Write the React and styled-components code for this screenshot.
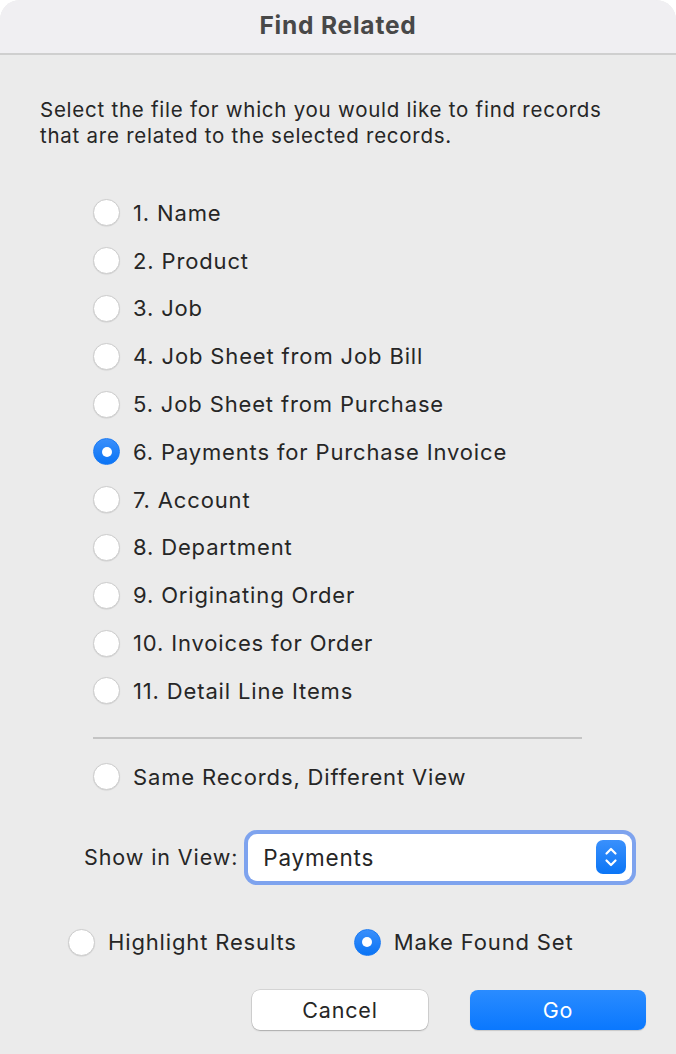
import React, { useState } from 'react';
import styled, { createGlobalStyle } from 'styled-components';

const GlobalStyle = createGlobalStyle`
  html, body {
    margin: 0;
    padding: 0;
    background: #ffffff;
  }
  * {
    box-sizing: border-box;
  }
`;

const Window = styled.div`
  width: 676px;
  height: 1054px;
  background-color: #ebebeb;
  border-radius: 20px 20px 0 0;
  overflow: hidden;
  font-family: Inter, "Liberation Sans", Arial, sans-serif;
  color: #262626;
  display: flex;
  flex-direction: column;
`;

const TitleBar = styled.div`
  height: 55px;
  flex-shrink: 0;
  background-color: #f0eff2;
  border-bottom: 2px solid #cfcfcf;
  display: flex;
  align-items: center;
  justify-content: center;
  padding-bottom: 3px;
`;

const Title = styled.h1`
  margin: 0;
  font-size: 24.5px;
  font-weight: 700;
  color: #484848;
  letter-spacing: 0.8px;
`;

const Body = styled.div`
  display: flex;
  flex-direction: column;
  padding: 42px 0 0 40px;
`;

const Intro = styled.p`
  margin: 0 0 40px;
  font-size: 20.5px;
  line-height: 26px;
  letter-spacing: 0.75px;
`;

const RadioList = styled.div`
  display: flex;
  flex-direction: column;
  padding-left: 53px;
`;

const RadioRow = styled.label`
  display: flex;
  align-items: center;
  gap: 13px;
  height: 47.8px;
  font-size: 22px;
  letter-spacing: 0.85px;
  cursor: default;
`;

const Circle = styled.span`
  width: 27px;
  height: 27px;
  flex-shrink: 0;
  border-radius: 50%;
  display: flex;
  align-items: center;
  justify-content: center;
  background: ${(p) => (p.$on ? 'linear-gradient(#3a8ffb, #0a74f5)' : '#ffffff')};
  border: 1px solid ${(p) => (p.$on ? '#1a7af3' : '#cdcdcd')};
  box-shadow: ${(p) => (p.$on ? 'none' : '0 0.5px 1px rgba(0, 0, 0, 0.12)')};

  &::after {
    content: '';
    display: ${(p) => (p.$on ? 'block' : 'none')};
    width: 10px;
    height: 10px;
    border-radius: 50%;
    background: #ffffff;
  }
`;

const Separator = styled.hr`
  width: 489px;
  margin: 22px 0 14px 53px;
  border: none;
  border-top: 2px solid #c4c4c4;
`;

const ViewRow = styled.div`
  display: flex;
  align-items: center;
  gap: 6px;
  margin: 29px 0 0 44px;
`;

const ViewLabel = styled.span`
  font-size: 21.5px;
  letter-spacing: 0.9px;
`;

const SelectRing = styled.div`
  width: 392px;
  height: 55px;
  padding: 4px;
  border-radius: 13px;
  background-color: #7ea3ee;
`;

const SelectBox = styled.div`
  height: 100%;
  border-radius: 9px;
  background: #ffffff;
  display: flex;
  align-items: center;
  justify-content: space-between;
  padding: 0 6px 0 15px;
  font-size: 22.5px;
  letter-spacing: 0.8px;
`;

const Stepper = styled.span`
  width: 30px;
  height: 34px;
  border-radius: 7px;
  background: linear-gradient(#3a90fc, #0a75f6);
  display: flex;
  align-items: center;
  justify-content: center;
`;

const OptionsRow = styled.div`
  display: flex;
  align-items: center;
  margin: 34px 0 0 28px;
  gap: 57px;
`;

const ButtonRow = styled.div`
  display: flex;
  gap: 42px;
  margin: 24px 0 0 212px;
`;

const Button = styled.button`
  width: 176px;
  height: 40px;
  border-radius: 8px;
  font-family: inherit;
  font-size: 21.5px;
  letter-spacing: 0.8px;
  color: ${(p) => (p.$primary ? '#ffffff' : '#262626')};
  background: ${(p) => (p.$primary ? 'linear-gradient(#2a8cff, #0a78fe)' : '#ffffff')};
  border: none;
  box-shadow: ${(p) =>
    p.$primary
      ? '0 1px 1px rgba(0, 0, 0, 0.15)'
      : '0 0 0 0.5px rgba(0, 0, 0, 0.18), 0 1px 1.5px rgba(0, 0, 0, 0.2)'};
  cursor: default;
`;

const Radio = ({ on, children, onPick }) => (
  <RadioRow onClick={onPick}>
    <Circle $on={on} />
    {children}
  </RadioRow>
);

const files = [
  '1. Name',
  '2. Product',
  '3. Job',
  '4. Job Sheet from Job Bill',
  '5. Job Sheet from Purchase',
  '6. Payments for Purchase Invoice',
  '7. Account',
  '8. Department',
  '9. Originating Order',
  '10. Invoices for Order',
  '11. Detail Line Items',
];

const App = () => {
  const [picked, setPicked] = useState(5);
  const [foundSet, setFoundSet] = useState(true);

  return (
    <>
      <GlobalStyle />
      <Window>
        <TitleBar>
          <Title>Find Related</Title>
        </TitleBar>
        <Body>
          <Intro>
            Select the file for which you would like to find records
            <br />
            that are related to the selected records.
          </Intro>
          <RadioList>
            {files.map((name, i) => (
              <Radio key={name} on={picked === i} onPick={() => setPicked(i)}>
                {name}
              </Radio>
            ))}
          </RadioList>
          <Separator />
          <RadioList>
            <Radio on={picked === -1} onPick={() => setPicked(-1)}>
              Same Records, Different View
            </Radio>
          </RadioList>
          <ViewRow>
            <ViewLabel>Show in View:</ViewLabel>
            <SelectRing>
              <SelectBox>
                Payments
                <Stepper>
                  <svg width="14" height="22" viewBox="0 0 14 22" fill="none">
                    <path d="M2.5 7.5 L7 3 L11.5 7.5" stroke="#fff" strokeWidth="2.2" strokeLinecap="round" strokeLinejoin="round" />
                    <path d="M2.5 14.5 L7 19 L11.5 14.5" stroke="#fff" strokeWidth="2.2" strokeLinecap="round" strokeLinejoin="round" />
                  </svg>
                </Stepper>
              </SelectBox>
            </SelectRing>
          </ViewRow>
          <OptionsRow>
            <Radio on={!foundSet} onPick={() => setFoundSet(false)}>
              Highlight Results
            </Radio>
            <Radio on={foundSet} onPick={() => setFoundSet(true)}>
              Make Found Set
            </Radio>
          </OptionsRow>
          <ButtonRow>
            <Button>Cancel</Button>
            <Button $primary>Go</Button>
          </ButtonRow>
        </Body>
      </Window>
    </>
  );
};

export default App;
